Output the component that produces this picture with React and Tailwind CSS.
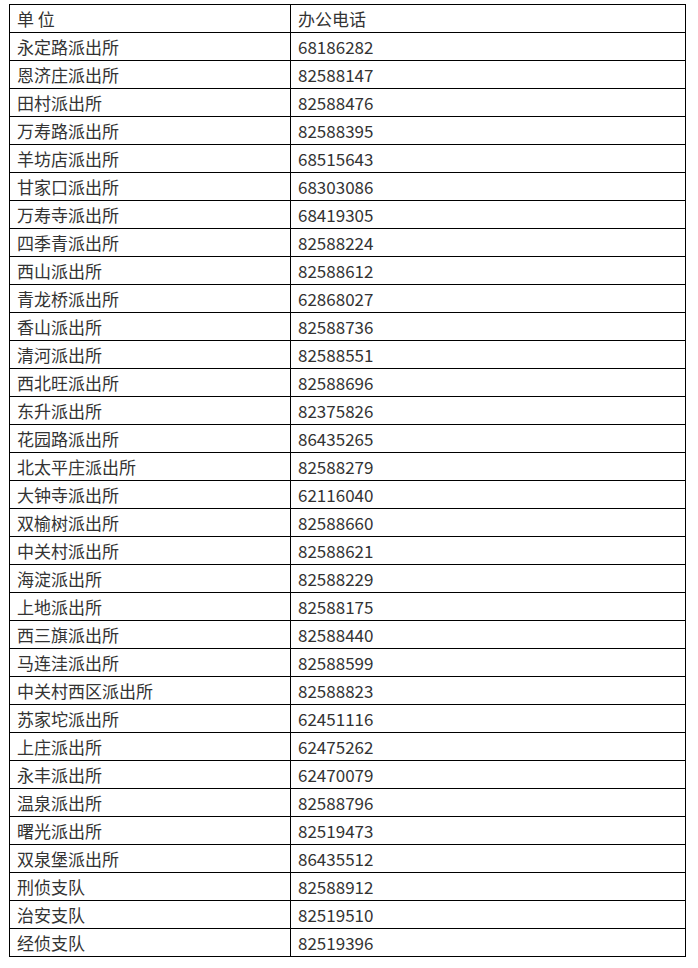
const rows = [
  ["永定路派出所", "68186282"],
  ["恩济庄派出所", "82588147"],
  ["田村派出所", "82588476"],
  ["万寿路派出所", "82588395"],
  ["羊坊店派出所", "68515643"],
  ["甘家口派出所", "68303086"],
  ["万寿寺派出所", "68419305"],
  ["四季青派出所", "82588224"],
  ["西山派出所", "82588612"],
  ["青龙桥派出所", "62868027"],
  ["香山派出所", "82588736"],
  ["清河派出所", "82588551"],
  ["西北旺派出所", "82588696"],
  ["东升派出所", "82375826"],
  ["花园路派出所", "86435265"],
  ["北太平庄派出所", "82588279"],
  ["大钟寺派出所", "62116040"],
  ["双榆树派出所", "82588660"],
  ["中关村派出所", "82588621"],
  ["海淀派出所", "82588229"],
  ["上地派出所", "82588175"],
  ["西三旗派出所", "82588440"],
  ["马连洼派出所", "82588599"],
  ["中关村西区派出所", "82588823"],
  ["苏家坨派出所", "62451116"],
  ["上庄派出所", "62475262"],
  ["永丰派出所", "62470079"],
  ["温泉派出所", "82588796"],
  ["曙光派出所", "82519473"],
  ["双泉堡派出所", "86435512"],
  ["刑侦支队", "82588912"],
  ["治安支队", "82519510"],
  ["经侦支队", "82519396"],
];

export default function App() {
  return (
    <div
      className="w-[698px] h-[968px] bg-white pt-[4px] pl-[9px]"
      style={{ fontFamily: '"Noto Sans CJK SC", "Noto Sans", sans-serif' }}
    >
      <table className="border-collapse w-[677px] table-fixed text-[17px] text-[#333] leading-none">
        <colgroup>
          <col className="w-[281px]" />
          <col />
        </colgroup>
        <tbody>
          <tr className="h-[28px]">
            <td className="border border-black pl-[7px] align-middle">单 位</td>
            <td className="border border-black pl-[7px] align-middle">办公电话</td>
          </tr>
          {rows.map(([name, phone]) => (
            <tr key={name} className="h-[28px]">
              <td className="border border-black pl-[7px] align-middle">{name}</td>
              <td className="border border-black pl-[7px] align-middle">{phone}</td>
            </tr>
          ))}
        </tbody>
      </table>
    </div>
  );
}
